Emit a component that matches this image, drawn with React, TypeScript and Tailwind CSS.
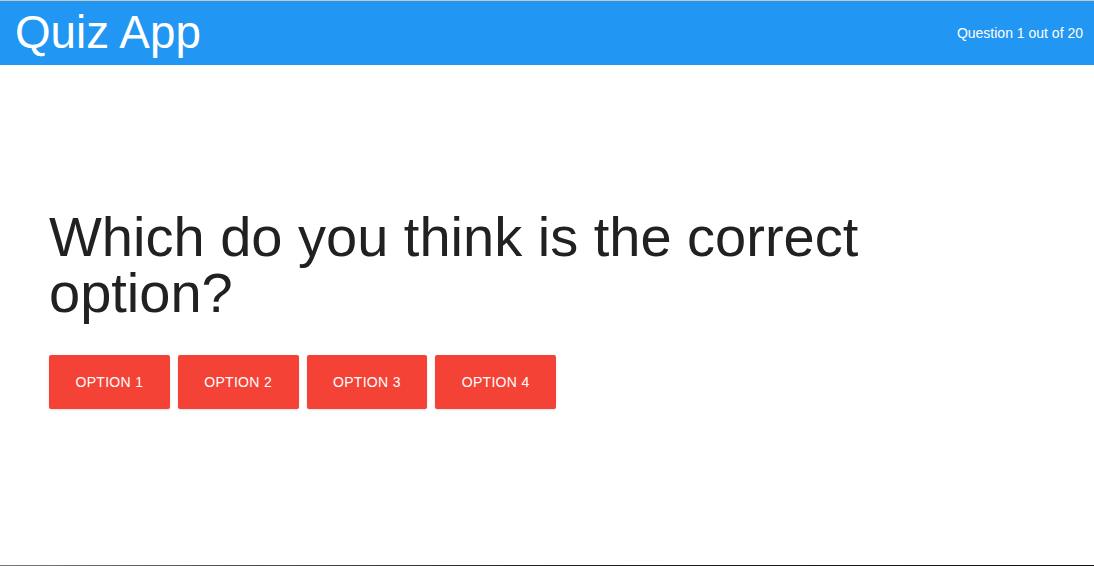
export default function App() {
  const options = ['Option 1', 'Option 2', 'Option 3', 'Option 4']

  return (
    <div className="min-h-[566px] h-[566px] flex flex-col bg-white font-['Liberation_Sans',Arial,sans-serif]">
      <div className="h-px bg-[#c8c8c8]" />
      <header className="h-16 bg-[#2196f3] flex items-center justify-between pl-[15px] pr-[11px] text-white">
        <h1 className="text-[45.8px] leading-none">Quiz App</h1>
        <span className="text-[14px]">Question 1 out of 20</span>
      </header>
      <main className="flex-1 px-[49px] pt-[144px]">
        <h2 className="text-[56px] leading-[56px] text-[#212121] mb-[34px]">
          Which do you think is the correct option?
        </h2>
        <div className="flex gap-2">
          {options.map((opt) => (
            <button
              key={opt}
              className="h-[54px] px-[26.5px] bg-[#f44336] text-white text-[14px] tracking-[0.3px] uppercase rounded-[2px] shadow-sm"
            >
              {opt}
            </button>
          ))}
        </div>
      </main>
      <div className="h-px bg-gradient-to-r from-[#777] via-[#222] to-[#111]" />
    </div>
  )
}
